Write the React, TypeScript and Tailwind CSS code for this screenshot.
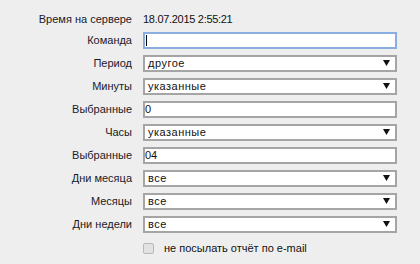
import React from "react";

const Arrow = () => (
  <svg width="7" height="6" viewBox="0 0 7 6" className="absolute right-[5px] top-[3px]">
    <polygon points="0,0 7,0 3.5,6" fill="#111" />
  </svg>
);

function Select({ value }: { value: string }) {
  return (
    <div className="relative h-[17px] border-2 border-[#a5a5a5] bg-white text-[11px] leading-[13px] text-[#111] pl-[3px] tracking-[0.5px]">
      {value}
      <Arrow />
    </div>
  );
}

function Input({ value, focused }: { value: string; focused?: boolean }) {
  return (
    <div
      className={
        "h-[17px] border-2 bg-white text-[11px] leading-[13px] text-[#111] pl-[0px] " +
        (focused ? "border-[#8aaee0]" : "border-[#a5a5a5]")
      }
    >
      {focused ? <span className="block w-[1px] h-[11px] bg-black ml-[1px] mt-[1px]" /> : value}
    </div>
  );
}

const Label = ({ children }: { children: React.ReactNode }) => (
  <div className="text-right text-[11px] text-[#1a1a2a] leading-[17px] whitespace-nowrap">{children}</div>
);

export default function App() {
  return (
    <div
      className="w-[420px] h-[264px] bg-[#eeeeee] pt-[12px]"
      style={{ fontFamily: '"Liberation Sans", Arial, sans-serif' }}
    >
      <div className="grid grid-cols-[132px_254px] gap-x-[11px] gap-y-[6px] items-center">
        <div className="text-right text-[11px] text-[#1a1a2a] leading-[14px] whitespace-nowrap">Время на сервере</div>
        <div className="text-[11px] text-[#111] leading-[14px] tracking-[-0.3px]">18.07.2015 2:55:21</div>
        <Label>Команда</Label>
        <Input value="" focused />
        <Label>Период</Label>
        <Select value="другое" />
        <Label>Минуты</Label>
        <Select value="указанные" />
        <Label>Выбранные</Label>
        <Input value="0" />
        <Label>Часы</Label>
        <Select value="указанные" />
        <Label>Выбранные</Label>
        <Input value="04" />
        <Label>Дни месяца</Label>
        <Select value="все" />
        <Label>Месяцы</Label>
        <Select value="все" />
        <Label>Дни недели</Label>
        <Select value="все" />
        <div />
        <div className="flex items-center h-[17px] mt-[1px]">
          <span className="w-[11px] h-[11px] rounded-[2px] border border-[#b8b8b8] bg-[#e2e2e2]" />
          <span className="ml-[10px] text-[11px] text-[#111]">не посылать отчёт по e-mail</span>
        </div>
      </div>
    </div>
  );
}
